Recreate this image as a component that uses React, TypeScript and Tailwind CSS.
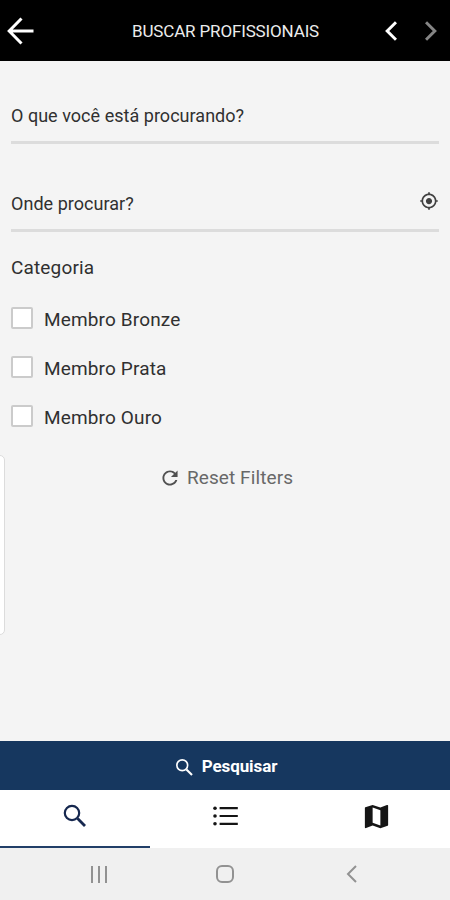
import React, { useState } from 'react';
import { IoMdLocate, IoMdMap, IoMdRefresh, IoMdSearch } from 'react-icons/io';

const CATEGORIES = ['Membro Bronze', 'Membro Prata', 'Membro Ouro'];

function SearchIcon({ className }: { className?: string }) {
  return (
    <svg className={className} viewBox="0 0 28 28" fill="none" stroke="currentColor" strokeWidth="2.2">
      <circle cx="11" cy="11" r="7.2" />
      <path d="m16.6 16.6 7.4 7.4" strokeWidth="2.8" />
    </svg>
  );
}

function ListIcon({ className }: { className?: string }) {
  return (
    <svg className={className} viewBox="0 0 28 28" fill="currentColor">
      <circle cx="3" cy="6.2" r="1.8" />
      <circle cx="3" cy="14" r="1.8" />
      <circle cx="3" cy="21.8" r="1.8" />
      <path d="M7.6 5.1h18.2v2.2H7.6zM7.6 12.9h18.2v2.2H7.6zM7.6 20.7h18.2v2.2H7.6z" />
    </svg>
  );
}

const TABS = [
  { id: 'search', label: 'Pesquisar', Icon: SearchIcon, size: 'size-[28px]' },
  { id: 'list', label: 'Lista', Icon: ListIcon, size: 'size-[28px]' },
  { id: 'map', label: 'Mapa', Icon: IoMdMap, size: 'size-[31px]' },
];

export default function App() {
  const [selected, setSelected] = useState<string[]>([]);
  const [activeTab, setActiveTab] = useState('search');

  const toggle = (name: string) =>
    setSelected(selected.includes(name) ? selected.filter((s) => s !== name) : [...selected, name]);

  return (
    <div className="relative flex h-[900px] w-[450px] flex-col overflow-hidden bg-[#f4f4f4] font-['Roboto',sans-serif] text-[#303030]">
      {/* Header */}
      <header className="flex h-[61px] shrink-0 items-center justify-between bg-black pr-[13px] pl-[7px] text-white">
        <button aria-label="Voltar" className="w-[125px]">
          <svg width="27" height="28" viewBox="0 0 27 28" fill="none" stroke="currentColor" strokeWidth="3">
            <path d="M14.5 1.5 2.2 14l12.3 12.5M2.5 14h24" />
          </svg>
        </button>
        <h1 className="text-[17px] leading-6 tracking-[-0.15px] whitespace-nowrap text-[#ececec]">BUSCAR PROFISSIONAIS</h1>
        <div className="flex flex-1 items-center justify-end gap-[28px]">
          <button aria-label="Anterior">
            <svg width="12" height="20" viewBox="0 0 12 20" fill="none" stroke="currentColor" strokeWidth="3">
              <path d="M11 1.2 2.2 10l8.8 8.8" />
            </svg>
          </button>
          <button aria-label="Próximo" className="text-[#858585]">
            <svg width="12" height="20" viewBox="0 0 12 20" fill="none" stroke="currentColor" strokeWidth="3">
              <path d="m1 1.2 8.8 8.8L1 18.8" />
            </svg>
          </button>
        </div>
      </header>

      {/* Filters */}
      <main className="flex-1 px-[11px]">
        <div className="flex h-[83px] items-end border-b-3 border-[#dcdcdc] pb-[13px] text-[18px] leading-6">
          <span className="tracking-[0.03px]">O que você está procurando?</span>
        </div>
        <div className="flex h-[88px] items-end justify-between border-b-3 border-[#dcdcdc] pb-[13px] text-[18px] leading-6">
          <span className="tracking-[0.03px]">Onde procurar?</span>
          <IoMdLocate className="mb-[5px] size-[20px] text-[#404040]" />
        </div>

        <h2 className="mt-[24px] text-[19px] leading-6 tracking-[0.15px]">Categoria</h2>
        <div className="mt-[15px]">
          {CATEGORIES.map((name) => (
            <label key={name} className="flex h-[49px] items-center gap-[11px] text-[19px] leading-6">
              <input
                type="checkbox"
                checked={selected.includes(name)}
                onChange={() => toggle(name)}
                className="mb-[3px] size-[22px] appearance-none rounded-[2px] border-2 border-[#cbcbcb] bg-white checked:bg-[#16375f]"
              />
              <span className="pt-px tracking-[0.15px]">{name}</span>
            </label>
          ))}
        </div>

        <button
          onClick={() => setSelected([])}
          className="mx-auto mt-[24px] flex items-center gap-[6px] pl-[2px] text-[19px] leading-6 text-[#686868]"
        >
          <IoMdRefresh className="size-[22px] text-[#505050]" />
          <span className="tracking-[0.1px]">Reset Filters</span>
        </button>
      </main>

      {/* Side drawer edge */}
      <div className="absolute top-[455px] left-[-10px] h-[180px] w-[15px] rounded-[5px] border border-[#dcdcdc] bg-white" />

      <button className="flex h-[49px] shrink-0 items-center justify-center gap-[7px] bg-[#16375f] pt-[3px] pl-px text-[17px] font-bold text-white">
        <SearchIcon className="size-[21px]" />
        <span className="tracking-[-0.1px]">Pesquisar</span>
      </button>

      {/* Tabs */}
      <nav className="grid h-[58px] shrink-0 grid-cols-3 bg-white text-[#151515]">
        {TABS.map(({ id, label, Icon, size }) => (
          <button
            key={id}
            aria-label={label}
            onClick={() => setActiveTab(id)}
            className={`flex items-center justify-center border-b-2 pb-[4px] ${
              activeTab === id ? 'border-[#223f68] text-[#16284f]' : 'border-transparent pl-[2px]'
            }`}
          >
            <Icon className={size} />
          </button>
        ))}
      </nav>

      {/* System navigation */}
      <footer className="flex h-[52px] shrink-0 items-center justify-around bg-[#f0f0f0] px-[36px] text-[#929292]">
        <svg width="18" height="18" viewBox="0 0 18 18" fill="none" stroke="currentColor" strokeWidth="2">
          <path d="M2 1v17M9 1v17M16 1v17" />
        </svg>
        <svg width="18" height="18" viewBox="0 0 18 18" fill="none" stroke="currentColor" strokeWidth="2">
          <rect x="1" y="1" width="16" height="16" rx="5" />
        </svg>
        <svg width="18" height="18" viewBox="0 0 18 18" fill="none" stroke="currentColor" strokeWidth="2">
          <path d="M14 1 6 9l8 8" />
        </svg>
      </footer>
    </div>
  );
}
